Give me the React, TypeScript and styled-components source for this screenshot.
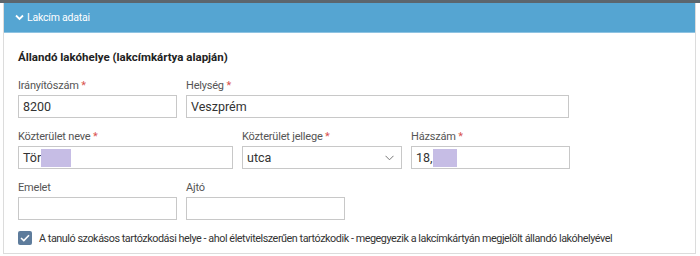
import React from "react";
import styled, { createGlobalStyle } from "styled-components";

const Global = createGlobalStyle`
  html, body { margin: 0; padding: 0; background: #fff; }
  body { font-family: Roboto, "Liberation Sans", Arial, sans-serif; }
`;

const TopStrip = styled.div`
  height: 3px;
  background: #5c666d;
`;

const Panel = styled.div`
  margin: 0 4px 0 3px;
  border: 1px solid #dcdcdc;
  border-top: none;
  height: 251px;
  box-sizing: border-box;
`;

const Header = styled.div`
  height: 30px;
  background: #55a5d2;
  border-bottom: 1px solid #8ec3e2;
  box-sizing: border-box;
  display: flex;
  align-items: center;
  padding-left: 11px;
  gap: 3px;
  color: #fff;
  font-size: 10.5px;
  letter-spacing: -0.2px;
`;

const Body = styled.div`
  padding: 16px 14px 0 14px;
`;

const Title = styled.div`
  font-weight: 700;
  font-size: 11.5px;
  line-height: 16px;
  color: #222;
  margin-bottom: 13px;
`;

const Row = styled.div`
  display: flex;
  gap: 9px;
  margin-bottom: 11px;
`;

const Field = styled.div<{ $w: number }>`
  width: ${(p) => p.$w}px;
  display: flex;
  flex-direction: column;
`;

const Label = styled.div`
  font-size: 11px;
  letter-spacing: -0.2px;
  line-height: 16px;
  color: #555;
  margin-bottom: 1px;
`;

const Star = styled.span`
  color: #d9534f;
`;

const Input = styled.div`
  height: 23px;
  box-sizing: border-box;
  border: 1px solid #c8c8c8;
  background: #fff;
  display: flex;
  align-items: center;
  padding-left: 4px;
  font-size: 12.5px;
  color: #333;
  position: relative;
`;

const Redact = styled.span<{ $w: number }>`
  display: inline-block;
  width: ${(p) => p.$w}px;
  height: 18px;
  background: #c6bde5;
`;

const Chevron = styled.svg`
  position: absolute;
  right: 7px;
  top: 8px;
`;

const CheckRow = styled.div`
  display: flex;
  align-items: center;
  gap: 7px;
  font-size: 10.8px;
  letter-spacing: -0.45px;
  color: #333;
  white-space: nowrap;
`;

const Box = styled.div`
  width: 14px;
  height: 14px;
  border-radius: 2px;
  background: #5e7c9c;
  display: flex;
  align-items: center;
  justify-content: center;
  flex: none;
`;

const Req = ({ children }: { children: React.ReactNode }) => (
  <Label>
    {children} <Star>*</Star>
  </Label>
);

export default function App() {
  return (
    <>
      <Global />
      <TopStrip />
      <Panel>
        <Header>
          <svg width="9" height="7" viewBox="0 0 9 7">
            <path d="M1 1.5 L4.5 5 L8 1.5" stroke="#fff" strokeWidth="1.8" fill="none" />
          </svg>
          <span>Lakcím adatai</span>
        </Header>
        <Body>
          <Title>Állandó lakóhelye (lakcímkártya alapján)</Title>
          <Row>
            <Field $w={159}>
              <Req>Irányítószám</Req>
              <Input>8200</Input>
            </Field>
            <Field $w={383}>
              <Req>Helység</Req>
              <Input>Veszprém</Input>
            </Field>
          </Row>
          <Row>
            <Field $w={215}>
              <Req>Közterület neve</Req>
              <Input>
                Tör
                <Redact $w={30} />
              </Input>
            </Field>
            <Field $w={160}>
              <Req>Közterület jellege</Req>
              <Input>
                utca
                <Chevron width="9" height="6" viewBox="0 0 9 6">
                  <path d="M0.5 0.8 L4.5 4.8 L8.5 0.8" stroke="#777" strokeWidth="1" fill="none" />
                </Chevron>
              </Input>
            </Field>
            <Field $w={159}>
              <Req>Házszám</Req>
              <Input>
                18,
                <Redact $w={24} />
              </Input>
            </Field>
          </Row>
          <Row>
            <Field $w={159}>
              <Label>Emelet</Label>
              <Input />
            </Field>
            <Field $w={159}>
              <Label>Ajtó</Label>
              <Input />
            </Field>
          </Row>
          <CheckRow>
            <Box>
              <svg width="10" height="8" viewBox="0 0 10 8">
                <path d="M1 4 L3.8 6.6 L9 1.2" stroke="#fff" strokeWidth="1.6" fill="none" />
              </svg>
            </Box>
            <span>
              A tanuló szokásos tartózkodási helye - ahol életvitelszerűen tartózkodik - megegyezik a lakcímkártyán megjelölt állandó lakóhelyével
            </span>
          </CheckRow>
        </Body>
      </Panel>
    </>
  );
}
